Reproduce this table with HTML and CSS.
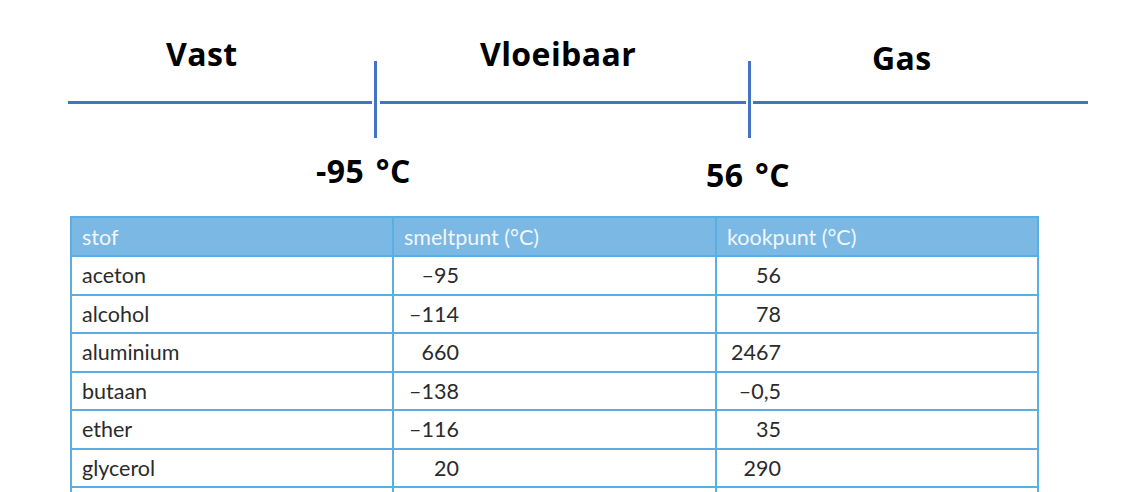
FILE: index.html
```html
<!DOCTYPE html>
<html lang="nl">
<head>
<meta charset="utf-8">
<title>Aggregatietoestanden aceton</title>
<link rel="stylesheet" href="styles.css">
</head>
<body>
<div class="diagram">
  <svg class="axis" width="1122" height="216" viewBox="0 0 1122 216" aria-hidden="true">
    <line x1="68" y1="102.5" x2="372" y2="102.5" stroke="#4472c4" stroke-width="3"/>
    <line x1="380" y1="102.5" x2="746" y2="102.5" stroke="#4472c4" stroke-width="3"/>
    <line x1="753" y1="102.5" x2="1088" y2="102.5" stroke="#4472c4" stroke-width="3"/>
    <line x1="375.5" y1="61" x2="375.5" y2="138" stroke="#4472c4" stroke-width="3"/>
    <line x1="749.5" y1="61" x2="749.5" y2="138" stroke="#4472c4" stroke-width="3"/>
  </svg>
  <span class="label l-vast">Vast</span>
  <span class="label l-vloei">Vloeibaar</span>
  <span class="label l-gas">Gas</span>
  <span class="label l-smelt">-95 °C</span>
  <span class="label l-kook">56 °C</span>
</div>
<table class="data">
  <colgroup>
    <col class="c1"><col class="c2"><col class="c3">
  </colgroup>
  <thead>
    <tr><th>stof</th><th>smeltpunt (°C)</th><th>kookpunt (°C)</th></tr>
  </thead>
  <tbody>
    <tr><td>aceton</td><td><span class="num m">–95</span></td><td><span class="num k">56</span></td></tr>
    <tr><td>alcohol</td><td><span class="num m">–114</span></td><td><span class="num k">78</span></td></tr>
    <tr><td>aluminium</td><td><span class="num m">660</span></td><td><span class="num k">2467</span></td></tr>
    <tr><td>butaan</td><td><span class="num m">–138</span></td><td><span class="num k">–0,5</span></td></tr>
    <tr><td>ether</td><td><span class="num m">–116</span></td><td><span class="num k">35</span></td></tr>
    <tr><td>glycerol</td><td><span class="num m">20</span></td><td><span class="num k">290</span></td></tr>
    <tr class="cut"><td></td><td></td><td></td></tr>
  </tbody>
</table>
</body>
</html>
```
FILE: styles.css
```css
html, body {
  margin: 0;
  padding: 0;
  background: #ffffff;
}
body {
  width: 1122px;
  height: 492px;
  overflow: hidden;
}
.diagram {
  position: relative;
  height: 216px;
}
.axis {
  display: block;
}
.label {
  position: absolute;
  font-family: "Open Sans", "Noto Sans", sans-serif;
  font-weight: 700;
  font-size: 32px;
  line-height: 32px;
  letter-spacing: 0.4px;
  color: #000;
  white-space: nowrap;
}
.l-vast { left: 166px; top: 38px; }
.l-vloei { left: 480px; top: 38px; }
.l-gas { left: 872px; top: 42px; }
.l-smelt { left: 316px; top: 155px; word-spacing: 3px; }
.l-kook { left: 706px; top: 159px; word-spacing: 3px; }

.data {
  margin-left: 70px;
  border-collapse: collapse;
  table-layout: fixed;
  width: 967px;
  font-family: Lato, "Open Sans", sans-serif;
  font-size: 21.5px;
}
.c1 { width: 322px; }
.c2 { width: 323px; }
.c3 { width: 322px; }
.data th, .data td {
  border: 2px solid #5aaee4;
  padding: 0 10px;
  text-align: left;
  vertical-align: middle;
  white-space: nowrap;
  overflow: hidden;
}
.data th {
  background: #7cb8e4;
  color: #f0f6fc;
  font-weight: 400;
  height: 39px;
  box-sizing: border-box;
}
.data td {
  color: #2b2b2b;
  height: 38.5px;
  box-sizing: border-box;
}
.num {
  display: inline-block;
  text-align: right;
}
.num.m { width: 55px; }
.num.k { width: 54px; }
```
